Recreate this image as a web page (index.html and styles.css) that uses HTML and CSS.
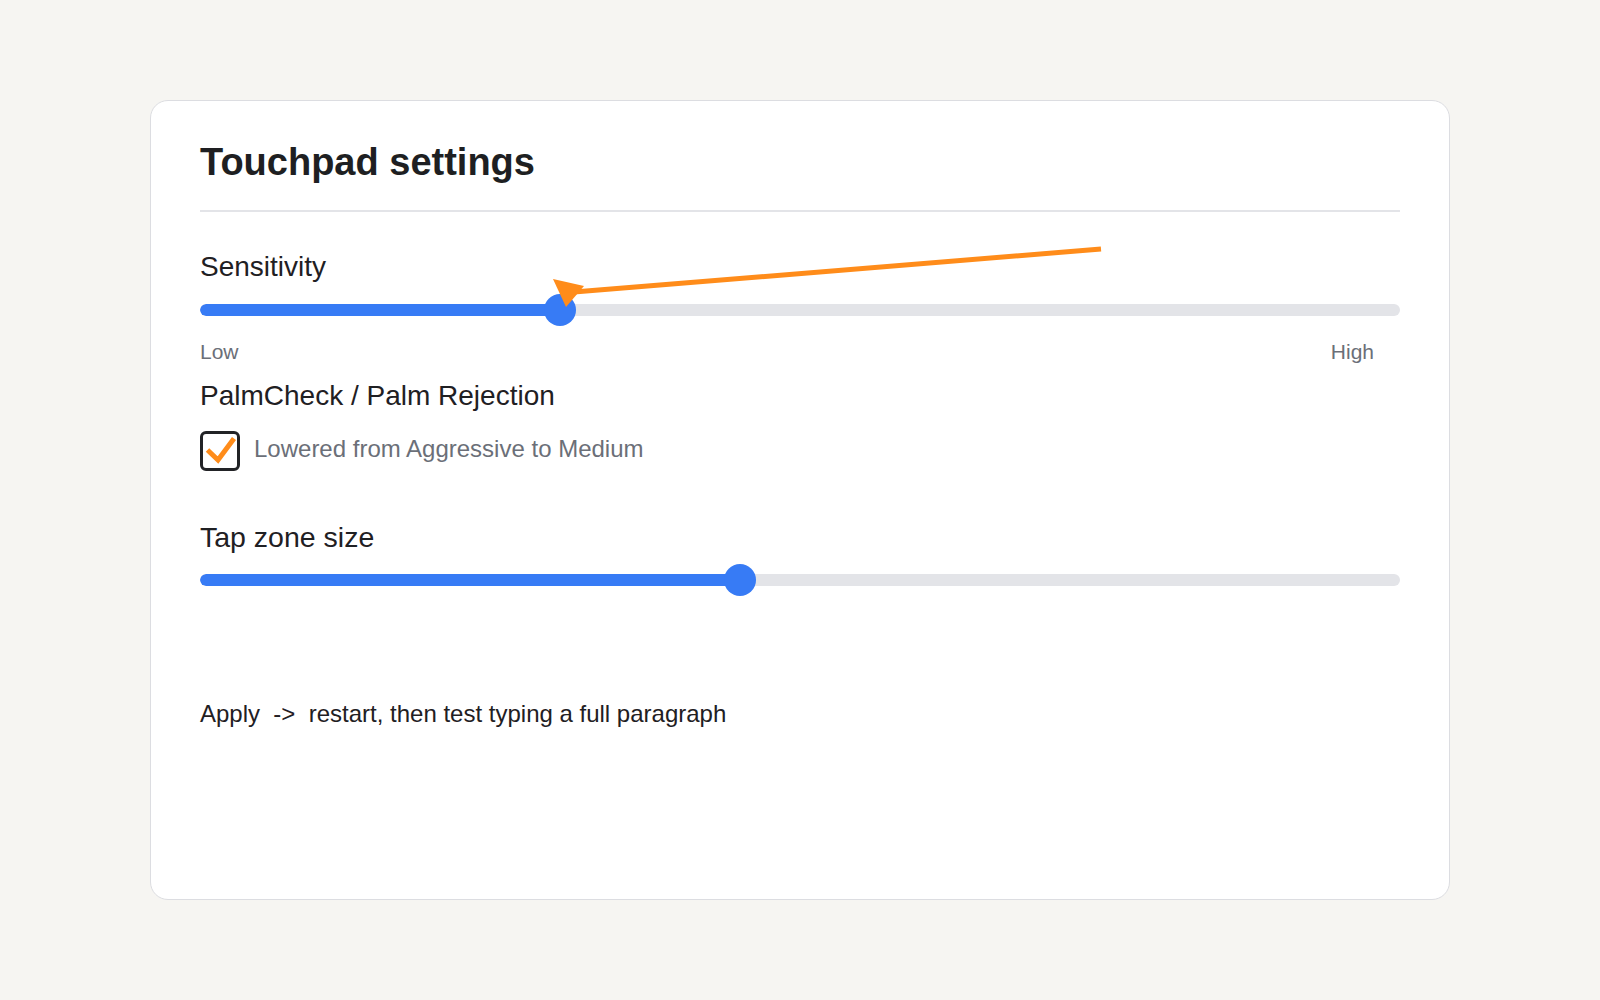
FILE: index.html
```html
<!DOCTYPE html>
<html lang="en">
<head>
<meta charset="utf-8">
<title>Touchpad settings</title>
<link rel="stylesheet" href="styles.css">
</head>
<body>
<div class="card">
  <div class="header">
    <h1 class="title">Touchpad settings</h1>
  </div>

  <div class="label label-first">Sensitivity</div>
  <div class="slider">
    <div class="track"><div class="fill" style="width:30%"></div></div>
    <div class="thumb" style="left:30%"></div>
  </div>
  <div class="scale">
    <span>Low</span>
    <span>High</span>
  </div>

  <div class="label label-palm">PalmCheck / Palm Rejection</div>
  <div class="check-row">
    <div class="checkbox">
      <svg class="checkmark" width="34" height="34" viewBox="0 0 34 34">
        <polyline points="4.5,16 15,26 31,4.5" fill="none" stroke="#ff8c1a" stroke-width="5" stroke-linejoin="miter"/>
      </svg>
    </div>
    <span class="check-text">Lowered from Aggressive to Medium</span>
  </div>

  <div class="label label-tap">Tap zone size</div>
  <div class="slider">
    <div class="track"><div class="fill" style="width:45%"></div></div>
    <div class="thumb" style="left:45%"></div>
  </div>

  <p class="apply">Apply  -&gt;  restart, then test typing a full paragraph</p>
</div>

<svg class="annotation" width="1600" height="1000" viewBox="0 0 1600 1000">
  <line x1="1101" y1="249" x2="574" y2="292" stroke="#ff8c1a" stroke-width="5"/>
  <polygon points="553,279 584,286 566,307" fill="#ff8c1a"/>
</svg>
</body>
</html>
```

FILE: styles.css
```css
html, body {
  margin: 0;
  padding: 0;
}

body {
  background: #f6f5f2;
  font-family: "Liberation Sans", Arial, sans-serif;
  color: #1f2023;
  padding: 100px 150px;
  box-sizing: border-box;
  width: 1600px;
  height: 1000px;
  position: relative;
}

.card {
  box-sizing: border-box;
  width: 1300px;
  height: 800px;
  background: #ffffff;
  border: 1px solid #dcdde1;
  border-radius: 18px;
  padding: 40px 49px;
}

.header {
  padding-bottom: 26px;
  border-bottom: 2px solid #e3e4e8;
}

.title {
  margin: 0;
  font-size: 38px;
  line-height: 43px;
  font-weight: 700;
  color: #1e1f22;
}

.label {
  font-size: 28px;
  line-height: 32px;
  color: #1f2023;
}

.label-first {
  margin-top: 39px;
}

.label-palm {
  margin-top: 16px;
}

.label-tap {
  margin-top: 50px;
  font-size: 28.5px;
}

.slider {
  position: relative;
  height: 32px;
  margin-top: 11px;
  display: flex;
  align-items: center;
}

.track {
  width: 100%;
  height: 12px;
  border-radius: 6px;
  background: #e3e4e8;
  overflow: hidden;
}

.fill {
  height: 100%;
  background: #377bf5;
  border-radius: 6px;
}

.thumb {
  position: absolute;
  top: 50%;
  width: 32px;
  height: 32px;
  border-radius: 50%;
  background: #377bf5;
  transform: translate(-50%, -50%);
}

.scale {
  display: flex;
  justify-content: space-between;
  margin-top: 14px;
  padding-right: 26px;
  font-size: 21px;
  line-height: 24px;
  color: #6b6f78;
}

.check-row {
  display: flex;
  align-items: center;
  gap: 14px;
  margin-top: 19px;
}

.checkbox {
  box-sizing: border-box;
  width: 40px;
  height: 40px;
  border: 3px solid #222326;
  border-radius: 6px;
  background: #ffffff;
  flex: none;
}

.checkmark {
  display: block;
  overflow: visible;
}

.check-text {
  font-size: 24px;
  line-height: 28px;
  padding-bottom: 4px;
  color: #6b6f78;
}

.apply {
  margin: 104px 0 0;
  font-size: 24px;
  line-height: 28px;
  color: #1f2023;
  white-space: pre;
}

.annotation {
  position: absolute;
  top: 0;
  left: 0;
  pointer-events: none;
}
```
